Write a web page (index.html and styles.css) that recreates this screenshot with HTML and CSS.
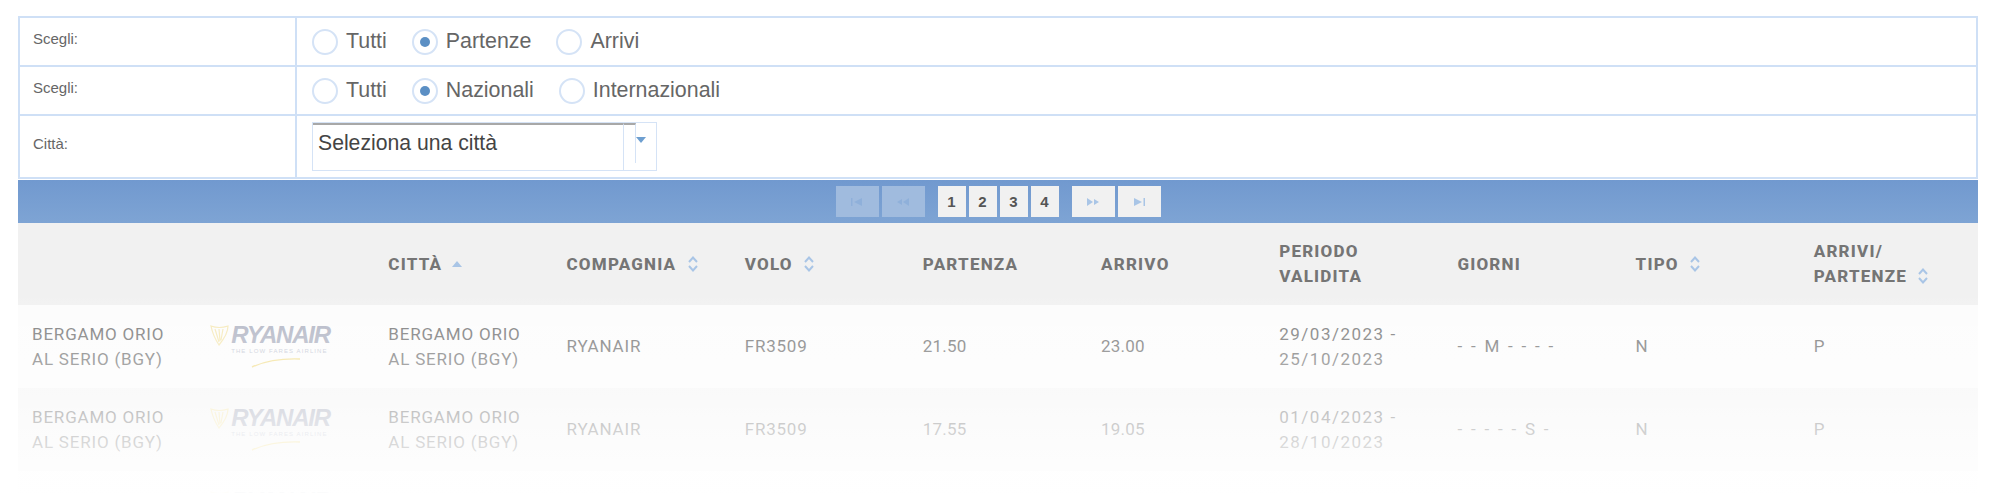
FILE: index.html
```html
<!DOCTYPE html>
<html lang="it">
<head>
    <meta charset="UTF-8">
    <title>Voli</title>
    <link rel="stylesheet" href="styles.css">
</head>
<body>
    <svg class="sprites" width="0" height="0">
        <symbol id="sort" viewBox="0 0 12 18">
            <path d="M2 7 L6 2.5 L10 7 M2 11 L6 15.5 L10 11" fill="none" stroke="#a9c5e6" stroke-width="2"/>
        </symbol>
        <symbol id="first" viewBox="0 0 16 10"><path d="M2 1v8h1.5V1zM13 1v8L5 5z" fill="#8fb0da"/></symbol>
        <symbol id="prev" viewBox="0 0 16 10"><path d="M7 2v6L2 5zM14 1v8L8 5z" fill="#8fb0da"/></symbol>
        <symbol id="next" viewBox="0 0 16 10"><path d="M2 1v8l6-4zM9 2v6l5-3z" fill="#a9c5e6"/></symbol>
        <symbol id="last" viewBox="0 0 16 10"><path d="M3 1v8l8-4zM12.5 1v8H14V1z" fill="#a9c5e6"/></symbol>
        <symbol id="logo" viewBox="0 0 130 50">
            <path d="M1 4 Q9 7 18 4 Q18 12 9 23 Q3 14 1 4Z M5 7 L9 20 M9 7 L10 19 M13 7 L11 18" fill="none" stroke="#f5e8b4" stroke-width="1.2"/>
            <path d="M42 45 Q62 36 90 37" fill="none" stroke="#f2df92" stroke-width="1.4"/>
        </symbol>
    </svg>

    <div class="page">
        <table class="filters">
            <tr class="row-a">
                <td class="label">Scegli:</td>
                <td class="field">
                    <div class="radios">
                        <span class="opt"><i class="radio"></i>Tutti</span>
                        <span class="opt"><i class="radio on"></i>Partenze</span>
                        <span class="opt"><i class="radio"></i>Arrivi</span>
                    </div>
                </td>
            </tr>
            <tr class="row-a">
                <td class="label">Scegli:</td>
                <td class="field">
                    <div class="radios">
                        <span class="opt"><i class="radio"></i>Tutti</span>
                        <span class="opt"><i class="radio on"></i>Nazionali</span>
                        <span class="opt"><i class="radio"></i>Internazionali</span>
                    </div>
                </td>
            </tr>
            <tr class="row-b">
                <td class="label">Città:</td>
                <td class="field">
                    <div class="combo">
                        <div class="combo-text">Seleziona una città</div>
                        <div class="combo-btn"><i class="combo-arrow"></i></div>
                    </div>
                </td>
            </tr>
        </table>

        <div class="pager">
            <span class="pg wide off"><svg><use href="#first"/></svg></span>
            <span class="pg wide off"><svg><use href="#prev"/></svg></span>
            <span class="pg num first-num">1</span>
            <span class="pg num">2</span>
            <span class="pg num">3</span>
            <span class="pg num">4</span>
            <span class="pg wide after-num"><svg><use href="#next"/></svg></span>
            <span class="pg wide"><svg><use href="#last"/></svg></span>
        </div>

        <table class="flights">
            <thead>
                <tr>
                    <th></th>
                    <th></th>
                    <th>Città <i class="sort-up"></i></th>
                    <th>Compagnia <svg class="sort"><use href="#sort"/></svg></th>
                    <th>Volo <svg class="sort"><use href="#sort"/></svg></th>
                    <th>Partenza</th>
                    <th>Arrivo</th>
                    <th>Periodo<br>validita</th>
                    <th>Giorni</th>
                    <th>Tipo <svg class="sort"><use href="#sort"/></svg></th>
                    <th>Arrivi/<br>Partenze <svg class="sort"><use href="#sort"/></svg></th>
                </tr>
            </thead>
            <tbody>
                <tr>
                    <td>BERGAMO ORIO<br>AL SERIO (BGY)</td>
                    <td>
                        <div class="logo">
                            <svg class="logo-art"><use href="#logo"/></svg>
                            <span class="logo-name">RYANAIR</span>
                            <span class="logo-tag">THE LOW FARES AIRLINE</span>
                        </div>
                    </td>
                    <td>BERGAMO ORIO<br>AL SERIO (BGY)</td>
                    <td>RYANAIR</td>
                    <td>FR3509</td>
                    <td class="time">21.50</td>
                    <td class="time">23.00</td>
                    <td class="date">29/03/2023 -<br>25/10/2023</td>
                    <td class="days">- - M - - - -</td>
                    <td>N</td>
                    <td>P</td>
                </tr>
                <tr>
                    <td>BERGAMO ORIO<br>AL SERIO (BGY)</td>
                    <td>
                        <div class="logo">
                            <svg class="logo-art"><use href="#logo"/></svg>
                            <span class="logo-name">RYANAIR</span>
                            <span class="logo-tag">THE LOW FARES AIRLINE</span>
                        </div>
                    </td>
                    <td>BERGAMO ORIO<br>AL SERIO (BGY)</td>
                    <td>RYANAIR</td>
                    <td>FR3509</td>
                    <td class="time">17.55</td>
                    <td class="time">19.05</td>
                    <td class="date">01/04/2023 -<br>28/10/2023</td>
                    <td class="days">- - - - - S -</td>
                    <td>N</td>
                    <td>P</td>
                </tr>
                <tr>
                    <td>BERGAMO ORIO<br>AL SERIO (BGY)</td>
                    <td>
                        <div class="logo">
                            <svg class="logo-art"><use href="#logo"/></svg>
                            <span class="logo-name">RYANAIR</span>
                            <span class="logo-tag">THE LOW FARES AIRLINE</span>
                        </div>
                    </td>
                    <td>BERGAMO ORIO<br>AL SERIO (BGY)</td>
                    <td>RYANAIR</td>
                    <td>FR3509</td>
                    <td class="time">09.20</td>
                    <td class="time">10.30</td>
                    <td class="date">29/10/2023 -<br>28/10/2023</td>
                    <td class="days">- - - - - S -</td>
                    <td>N</td>
                    <td>P</td>
                </tr>
            </tbody>
        </table>

        <div class="fade"></div>
    </div>
</body>
</html>
```

FILE: styles.css
```css
html, body {
    margin: 0;
    height: 493px;
    overflow: hidden;
    background: #fff;
}
.sprites {
    display: block;
    height: 0;
}
.page {
    position: relative;
    height: 493px;
    padding: 16px 22px 0 18px;
    box-sizing: border-box;
    overflow: hidden;
    font-family: "Liberation Sans", Arial, sans-serif;
}

/* filter form */
.filters {
    width: 100%;
    table-layout: fixed;
    border-collapse: collapse;
    border: 2px solid #cfe0f6;
}
.filters td {
    border: 2px solid #cfe0f6;
    padding: 0;
}
.row-a {
    height: 49px;
}
.row-b {
    height: 63px;
}
.label {
    width: 277px;
    box-sizing: border-box;
    padding: 0 0 6px 13px !important;
    font-size: 15px;
    color: #666;
}
.field {
    padding-left: 15px !important;
}
.radios {
    display: flex;
    gap: 25px;
    font-size: 21.4px;
    color: #666;
}
.opt {
    display: flex;
    align-items: center;
    gap: 8px;
}
.radio {
    display: flex;
    align-items: center;
    justify-content: center;
    width: 26px;
    height: 26px;
    box-sizing: border-box;
    border: 2px solid #d5e3f6;
    border-radius: 50%;
}
.radio.on::after {
    content: "";
    width: 10px;
    height: 10px;
    border-radius: 50%;
    background: #5b8fc4;
}
.combo {
    display: flex;
    width: 345px;
    height: 49px;
    box-sizing: border-box;
    border: 1px solid #d5e3f6;
}
.combo-text {
    width: 311px;
    box-sizing: border-box;
    padding: 6px 0 0 5px;
    border-top: 2px solid #a8a8a8;
    border-right: 1px solid #d5e3f6;
    font-size: 21.2px;
    color: #444;
}
.combo-btn {
    width: 12px;
    height: 40px;
    box-sizing: border-box;
    border-top: 2px solid #a8a8a8;
    border-right: 1px solid #d5e3f6;
}
.combo-arrow {
    display: block;
    width: 0;
    height: 0;
    margin: 12px 0 0 12px;
    border-left: 5px solid transparent;
    border-right: 5px solid transparent;
    border-top: 6px solid #6e9fd0;
}

/* pager */
.pager {
    display: flex;
    justify-content: center;
    align-items: center;
    gap: 3px;
    height: 43px;
    margin-top: 1px;
    background: linear-gradient(#7199cf, #7ea4d4);
}
.pg {
    display: flex;
    align-items: center;
    justify-content: center;
    height: 31px;
    background: #f1f1f1;
}
.pg.off {
    background: #a0bbde;
}
.pg.wide {
    width: 43px;
}
.pg svg {
    width: 16px;
    height: 10px;
}
.pg.num {
    width: 28px;
    font-size: 15px;
    font-weight: bold;
    color: #555;
}
.first-num {
    margin-left: 10px;
}
.after-num {
    margin-left: 10px;
}

/* flights table */
.flights {
    width: 100%;
    table-layout: fixed;
    border-collapse: collapse;
    font-family: Roboto, sans-serif;
    color: #777;
}
.flights th {
    height: 82px;
    padding: 0 14px;
    background: #f1f1f1;
    text-align: left;
    font-size: 17px;
    line-height: 25px;
    font-weight: 800;
    letter-spacing: 1.2px;
    text-transform: uppercase;
    color: #757575;
}
.flights td {
    height: 83px;
    padding: 0 14px;
    font-size: 17px;
    line-height: 25px;
    letter-spacing: .8px;
    color: #777;
    background: #fcfcfc;
}
.flights tbody tr:nth-child(even) td {
    background: #f5f5f5;
}
.flights td.time {
    letter-spacing: .2px;
}
.flights td.date {
    letter-spacing: 1.5px;
}
.flights td.days {
    word-spacing: 3px;
}
.sort {
    width: 12px;
    height: 18px;
    margin-left: 5px;
    vertical-align: -3px;
}
.sort-up {
    display: inline-block;
    width: 0;
    height: 0;
    margin-left: 4px;
    vertical-align: 3px;
    border-left: 5px solid transparent;
    border-right: 5px solid transparent;
    border-bottom: 6px solid #a9c5e6;
}

/* airline logo */
.logo {
    position: relative;
    width: 130px;
    height: 50px;
}
.logo-art {
    position: absolute;
    left: 0;
    top: 0;
    width: 130px;
    height: 50px;
}
.logo-name {
    position: absolute;
    left: 21px;
    top: -1px;
    font: italic 700 24px/28px "Liberation Sans", sans-serif;
    letter-spacing: -1.2px;
    color: #b0b4c3;
}
.logo-tag {
    position: absolute;
    left: 21px;
    top: 25px;
    font: 6px/8px "Liberation Sans", sans-serif;
    letter-spacing: 1.1px;
    white-space: nowrap;
    color: #c4c8d4;
}

.fade {
    position: absolute;
    left: 0;
    right: 0;
    top: 290px;
    bottom: 0;
    background: linear-gradient(rgba(255, 255, 255, 0), rgba(255, 255, 255, .95));
    pointer-events: none;
}
```
